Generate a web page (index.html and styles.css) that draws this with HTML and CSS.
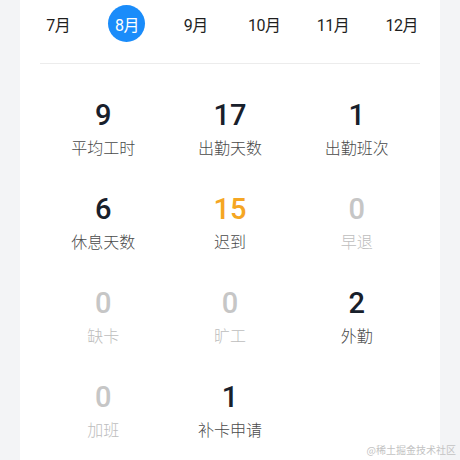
FILE: index.html
```html
<!DOCTYPE html>
<html>
<head>
  <meta charset="utf-8">
  <link rel="stylesheet" href="styles.css">
</head>
<body>
  <div class="card">
    <div class="months">
      <div class="month">7月</div>
      <div class="month active">8月</div>
      <div class="month">9月</div>
      <div class="month">10月</div>
      <div class="month">11月</div>
      <div class="month">12月</div>
    </div>
    <div class="divider"></div>
    <div class="stats">
      <div class="stat"><div class="num">9</div><div class="label">平均工时</div></div>
      <div class="stat"><div class="num">17</div><div class="label">出勤天数</div></div>
      <div class="stat"><div class="num">1</div><div class="label">出勤班次</div></div>
      <div class="stat"><div class="num">6</div><div class="label">休息天数</div></div>
      <div class="stat warn"><div class="num">15</div><div class="label">迟到</div></div>
      <div class="stat empty"><div class="num">0</div><div class="label">早退</div></div>
      <div class="stat empty"><div class="num">0</div><div class="label">缺卡</div></div>
      <div class="stat empty"><div class="num">0</div><div class="label">旷工</div></div>
      <div class="stat"><div class="num">2</div><div class="label">外勤</div></div>
      <div class="stat empty"><div class="num">0</div><div class="label">加班</div></div>
      <div class="stat"><div class="num">1</div><div class="label">补卡申请</div></div>
    </div>
  </div>
  <div class="watermark">@稀土掘金技术社区</div>
</body>
</html>
```

FILE: styles.css
```css
body {
  margin: 0;
  height: 460px;
  overflow: hidden;
  background: #f3f4f6;
  font-family: 'Noto Sans CJK SC', sans-serif;
  position: relative;
}

.card {
  margin: 0 20px;
  height: 460px;
  background: #fff;
  padding-top: 5px;
  box-sizing: border-box;
}

.months {
  display: grid;
  grid-template-columns: repeat(6, 1fr);
  padding: 0 4px;
}

.month {
  justify-self: center;
  width: 37px;
  height: 37px;
  border-radius: 50%;
  display: flex;
  align-items: center;
  justify-content: center;
  font-family: 'Roboto', 'Noto Sans CJK SC', sans-serif;
  font-size: 16px;
  color: #1f1f1f;
  white-space: nowrap;
  letter-spacing: -0.5px;
}

.month.active {
  background: #1a8cfa;
  color: #fff;
}

.divider {
  height: 1px;
  background: #ececec;
  margin: 21px 20px 0;
}

.stats {
  display: grid;
  grid-template-columns: repeat(3, 1fr);
  row-gap: 32px;
  padding: 33px 20px 0;
}

.stat {
  display: flex;
  flex-direction: column;
  align-items: center;
}

.num {
  font-family: 'Roboto', sans-serif;
  font-weight: 500;
  font-size: 29px;
  line-height: 36px;
  color: #18202b;
}

.label {
  margin-top: 2px;
  font-size: 16px;
  font-weight: 300;
  line-height: 24px;
  color: #4a4a4a;
}

.warn .num {
  color: #f5a623;
}

.empty .num {
  color: #c6c6c6;
}

.empty .label {
  color: #bdbdbd;
}

.watermark {
  position: absolute;
  right: 4px;
  bottom: 3px;
  font-size: 10px;
  color: #c3c3c3;
}
```
